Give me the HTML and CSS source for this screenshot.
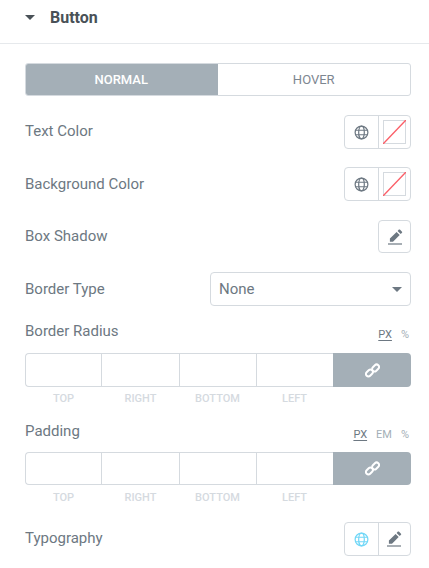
FILE: index.html
```html
<!DOCTYPE html>
<html lang="en">
<head>
<meta charset="utf-8">
<title>Button</title>
<link rel="stylesheet" href="styles.css">
</head>
<body>
<svg class="defs" width="0" height="0" aria-hidden="true">
  <symbol id="globe" viewBox="0 0 16 16">
    <g fill="none" stroke="currentColor" stroke-width="1.3">
      <circle cx="8" cy="8" r="6.8"/>
      <ellipse cx="8" cy="8" rx="3" ry="6.8"/>
      <path d="M1.6 5.6h12.8M1.6 10.4h12.8"/>
    </g>
  </symbol>
  <symbol id="pen" viewBox="0 0 16 16">
    <path fill="currentColor" d="M9.6 2.9l3.1 3.1-6.7 6.7H2.9V9.6zM10.6 1.9l1.3-1.3c.3-.3.7-.3 1 0l2.1 2.1c.3.3.3.7 0 1l-1.3 1.3z"/>
    <path fill="currentColor" d="M1 14.4h14v1.2H1z"/>
  </symbol>
  <symbol id="link" viewBox="0 0 16 16">
    <g fill="none" stroke="currentColor" stroke-width="2.1">
      <rect x="0.6" y="8.1" width="8.2" height="5.2" rx="2.6" transform="rotate(-45 4.7 10.7)"/>
      <rect x="7.2" y="2.7" width="8.2" height="5.2" rx="2.6" transform="rotate(-45 11.3 5.3)"/>
    </g>
  </symbol>
</svg>

<header class="section-head">
  <span class="caret caret-dark"></span>
  <h2 class="section-title">Button</h2>
</header>

<main class="panel">
  <div class="tabs">
    <div class="tab tab-active">NORMAL</div>
    <div class="tab">HOVER</div>
  </div>

  <div class="row row-text-color">
    <span class="label label-up">Text Color</span>
    <div class="pair">
      <span class="pair-cell"><svg class="ico-globe"><use href="#globe"/></svg></span>
      <span class="pair-cell"><span class="swatch"><svg class="swatch-line" viewBox="0 0 23 24" preserveAspectRatio="none"><path d="M0 24L23 0"/></svg></span></span>
    </div>
  </div>

  <div class="row row-bg-color">
    <span class="label">Background Color</span>
    <div class="pair">
      <span class="pair-cell"><svg class="ico-globe"><use href="#globe"/></svg></span>
      <span class="pair-cell"><span class="swatch"><svg class="swatch-line" viewBox="0 0 23 24" preserveAspectRatio="none"><path d="M0 24L23 0"/></svg></span></span>
    </div>
  </div>

  <div class="row row-shadow">
    <span class="label label-up">Box Shadow</span>
    <span class="single"><svg class="ico-pen"><use href="#pen"/></svg></span>
  </div>

  <div class="row row-border-type">
    <span class="label">Border Type</span>
    <div class="select">None<span class="caret caret-grey"></span></div>
  </div>

  <div class="dim dim-radius">
    <div class="dim-head">
      <span class="label label-up">Border Radius</span>
      <div class="units"><span class="unit unit-on">PX</span><span class="unit">%</span></div>
    </div>
    <div class="dim-inputs">
      <span class="cell"></span><span class="cell"></span><span class="cell"></span><span class="cell"></span>
      <span class="link"><svg class="ico-link"><use href="#link"/></svg></span>
    </div>
    <div class="dim-labels">
      <span>TOP</span><span>RIGHT</span><span>BOTTOM</span><span>LEFT</span><span class="spacer"></span>
    </div>
  </div>

  <div class="dim dim-padding">
    <div class="dim-head">
      <span class="label label-up">Padding</span>
      <div class="units"><span class="unit unit-on">PX</span><span class="unit">EM</span><span class="unit">%</span></div>
    </div>
    <div class="dim-inputs">
      <span class="cell"></span><span class="cell"></span><span class="cell"></span><span class="cell"></span>
      <span class="link"><svg class="ico-link"><use href="#link"/></svg></span>
    </div>
    <div class="dim-labels">
      <span>TOP</span><span>RIGHT</span><span>BOTTOM</span><span>LEFT</span><span class="spacer"></span>
    </div>
  </div>

  <div class="row row-typography">
    <span class="label label-up">Typography</span>
    <div class="pair">
      <span class="pair-cell"><svg class="ico-globe ico-globe-on"><use href="#globe"/></svg></span>
      <span class="pair-cell"><svg class="ico-pen"><use href="#pen"/></svg></span>
    </div>
  </div>
</main>
</body>
</html>
```
FILE: styles.css
```css
* { box-sizing: border-box; }
html, body { margin: 0; padding: 0; }
body {
  width: 429px;
  height: 568px;
  overflow: hidden;
  background: #fff;
  font-family: Roboto, "Liberation Sans", sans-serif;
  color: #6d7882;
}
.defs { display: block; height: 0; }

.section-head {
  height: 44px;
  padding: 0 25px 9px;
  display: flex;
  align-items: center;
  gap: 15px;
  border-bottom: 1px solid #e6e9ec;
}
.section-title {
  margin: 0;
  font-size: 16px;
  font-weight: 700;
  line-height: 17px;
  color: #495157;
}
.caret {
  width: 0;
  height: 0;
  border-left: 5px solid transparent;
  border-right: 5px solid transparent;
  border-top: 5px solid #495157;
}
.caret-grey { border-top-color: #6d7882; border-left-width: 5.5px; border-right-width: 5.5px; }

.panel { padding: 19px 18px 0 25px; }

.tabs {
  display: flex;
  height: 33px;
  width: 386px;
  border: 1px solid #d5dadf;
  border-radius: 3px;
  overflow: hidden;
}
.tab {
  flex: 1 1 50%;
  display: flex;
  align-items: center;
  justify-content: center;
  font-size: 13px;
  color: #7d8690;
}
.tab-active {
  margin: -1px 0 -1px -1px;
  background: #a4afb7;
  color: #fff;
  font-weight: 500;
}

.row {
  display: flex;
  align-items: center;
  justify-content: space-between;
  width: 386px;
}
.row-text-color { margin-top: 19px; height: 34px; }
.row-bg-color { margin-top: 18px; height: 34px; }
.row-shadow { margin-top: 19px; height: 33px; }
.row-border-type { margin-top: 19px; height: 34px; }
.row-typography { margin-top: 18px; height: 34px; }
.label { font-size: 15px; line-height: 17px; color: #6d7882; }
.label-up { margin-top: -1px; }

.pair {
  width: 67px;
  height: 34px;
  display: flex;
  border: 1px solid #d5dadf;
  border-radius: 4px;
}
.pair-cell {
  display: flex;
  align-items: center;
  justify-content: center;
  width: 33px;
}
.pair-cell + .pair-cell { border-left: 1px solid #d5dadf; }
.swatch {
  position: relative;
  display: block;
  width: 23px;
  height: 24px;
  border: 1px solid #d5dadf;
}
.swatch-line {
  position: absolute;
  inset: -1px;
  width: 23px;
  height: 24px;
  fill: none;
  stroke: #fb5f68;
  stroke-width: 1.4;
}
.ico-globe { width: 15px; height: 15px; color: #6d7882; display: block; }
.ico-globe-on { color: #71d7f7; }
.ico-pen { width: 16px; height: 16px; color: #6d7882; display: block; }
.single {
  width: 33px;
  height: 33px;
  display: flex;
  align-items: center;
  justify-content: center;
  border: 1px solid #d5dadf;
  border-radius: 4px;
}

.select {
  width: 201px;
  height: 34px;
  padding: 0 8px;
  display: flex;
  align-items: center;
  justify-content: space-between;
  border: 1px solid #d5dadf;
  border-radius: 4px;
  font-size: 15px;
  color: #6d7882;
}

.dim { width: 386px; }
.dim-radius { margin-top: 17px; }
.dim-padding { margin-top: 18px; }
.dim-head {
  height: 17px;
  display: flex;
  align-items: center;
  justify-content: space-between;
}
.dim-radius .dim-head { margin-bottom: 13px; }
.dim-padding .dim-head { margin-bottom: 12px; }
.units { display: flex; gap: 9px; margin-top: 6px; padding-right: 2px; }
.unit { font-size: 11px; line-height: 12px; color: #a4afb7; }
.unit-on { color: #6d7882; text-decoration: underline; text-underline-offset: 2px; }

.dim-inputs {
  height: 34px;
  display: grid;
  grid-template-columns: 76px 78px 77px 77px 78px;
}
.dim-padding .dim-inputs { height: 33px; }
.cell {
  border: 1px solid #d5dadf;
  border-right: 0;
}
.cell:first-child { border-radius: 4px 0 0 4px; }
.link {
  display: flex;
  align-items: center;
  justify-content: center;
  background: #a4afb7;
  border-radius: 0 4px 4px 0;
}
.ico-link { width: 15px; height: 15px; color: #fff; display: block; }

.dim-labels {
  margin-top: 6px;
  display: grid;
  grid-template-columns: 77px 77px 77px 77px 78px;
  font-size: 11px;
  line-height: 12px;
  text-align: center;
  color: #d5dadf;
  font-weight: 500;
}
.dim-padding .dim-labels { margin-top: 7px; }
```
